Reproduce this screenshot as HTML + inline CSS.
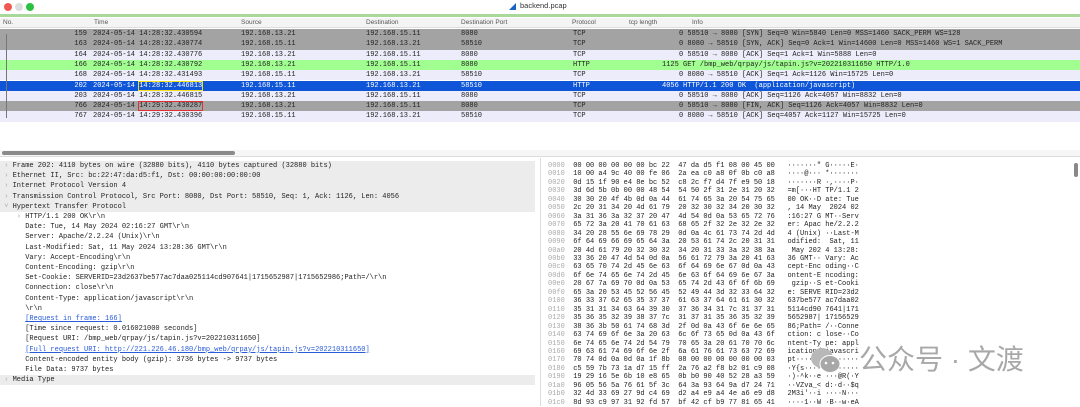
<!DOCTYPE html><html><head><meta charset="utf-8"><style>
*{margin:0;padding:0;box-sizing:border-box}
body{width:1080px;height:406px;background:#fff;position:relative;overflow:hidden;font-family:"Liberation Mono",monospace;font-size:7px;color:#222}
.a{position:absolute;white-space:pre}
.hd{font-family:"Liberation Sans",sans-serif;font-size:6.5px;color:#555}
.row{position:absolute;left:0;width:1080px;height:10.3px;line-height:10.3px}
.row .n{position:absolute;left:40px;width:47px;text-align:right}
.row .t{position:absolute;left:93px}
.g{background:#a3a3a3}.l{background:#ececfa}.gr{background:#a0ff90}.b{background:#0e55d8;color:#fff}
.dl{position:absolute;left:0;height:10.2px;line-height:10.2px;white-space:pre}
.tp{background:#ececec;width:535px}
.lk{color:#2a5bd8;text-decoration:underline}
.hx{position:absolute;left:548px;white-space:pre;line-height:8.45px}
.of{color:#aaa}
</style></head><body>
<div class="a" style="left:4px;top:3px;width:8px;height:8px;border-radius:50%;background:#ee5a52"></div>
<div class="a" style="left:15px;top:3px;width:8px;height:8px;border-radius:50%;background:#ddd"></div>
<div class="a" style="left:26px;top:3px;width:8px;height:8px;border-radius:50%;background:#2bc140"></div>
<svg class="a" style="left:508px;top:2px" width="9" height="9"><path d="M1 8 L8 1 L8 8 Z" fill="#1a63c8"/></svg>
<div class="a" style="left:520px;top:1px;font-family:'Liberation Sans',sans-serif;font-size:7.5px;color:#333">backend.pcap</div>
<div class="a" style="left:0;top:14px;width:1080px;height:3px;background:#a8d89a"></div>
<div class="a" style="left:0;top:18px;width:1080px;height:10px;background:#f4f4f4;border-bottom:1px solid #ddd"></div>
<div class="a hd" style="left:3px;top:19px">No.</div>
<div class="a hd" style="left:94px;top:19px">Time</div>
<div class="a hd" style="left:241px;top:19px">Source</div>
<div class="a hd" style="left:366px;top:19px">Destination</div>
<div class="a hd" style="left:461px;top:19px">Destination Port</div>
<div class="a hd" style="left:572px;top:19px">Protocol</div>
<div class="a hd" style="left:629px;top:19px">tcp length</div>
<div class="a hd" style="left:692px;top:19px">Info</div>

<div class="row g" style="top:29px"><span class="n">159</span><span class="t">2024-05-14 14:28:32.430594</span><span class="a" style="left:241px">192.168.13.21</span><span class="a" style="left:366px">192.168.15.11</span><span class="a" style="left:461px">8080</span><span class="a" style="left:573px">TCP</span><span class="a" style="left:679px">0 58510 → 8080 [SYN] Seq=0 Win=5840 Len=0 MSS=1460 SACK_PERM WS=128</span></div>
<div class="row g" style="top:39.3px"><span class="n">163</span><span class="t">2024-05-14 14:28:32.430774</span><span class="a" style="left:241px">192.168.15.11</span><span class="a" style="left:366px">192.168.13.21</span><span class="a" style="left:461px">58510</span><span class="a" style="left:573px">TCP</span><span class="a" style="left:679px">0 8080 → 58510 [SYN, ACK] Seq=0 Ack=1 Win=14600 Len=0 MSS=1460 WS=1 SACK_PERM</span></div>
<div class="row l" style="top:49.6px"><span class="n">164</span><span class="t">2024-05-14 14:28:32.430776</span><span class="a" style="left:241px">192.168.13.21</span><span class="a" style="left:366px">192.168.15.11</span><span class="a" style="left:461px">8080</span><span class="a" style="left:573px">TCP</span><span class="a" style="left:679px">0 58510 → 8080 [ACK] Seq=1 Ack=1 Win=5888 Len=0</span></div>
<div class="row gr" style="top:59.9px"><span class="n">166</span><span class="t">2024-05-14 14:28:32.430792</span><span class="a" style="left:241px">192.168.13.21</span><span class="a" style="left:366px">192.168.15.11</span><span class="a" style="left:461px">8080</span><span class="a" style="left:573px">HTTP</span><span class="a" style="left:662px">1125 GET /bmp_web/qrpay/js/tapin.js?v=202210311650 HTTP/1.0</span></div>
<div class="row l" style="top:70.2px"><span class="n">168</span><span class="t">2024-05-14 14:28:32.431493</span><span class="a" style="left:241px">192.168.15.11</span><span class="a" style="left:366px">192.168.13.21</span><span class="a" style="left:461px">58510</span><span class="a" style="left:573px">TCP</span><span class="a" style="left:679px">0 8080 → 58510 [ACK] Seq=1 Ack=1126 Win=15725 Len=0</span></div>
<div class="row b" style="top:80.5px"><span class="n">202</span><span class="t">2024-05-14 <span style="outline:1px solid #f0e020">14:28:32.446813</span></span><span class="a" style="left:241px">192.168.15.11</span><span class="a" style="left:366px">192.168.13.21</span><span class="a" style="left:461px">58510</span><span class="a" style="left:573px">HTTP</span><span class="a" style="left:662px">4056 HTTP/1.1 200 OK  (application/javascript)</span></div>
<div class="row l" style="top:90.8px"><span class="n">203</span><span class="t">2024-05-14 14:28:32.446815</span><span class="a" style="left:241px">192.168.13.21</span><span class="a" style="left:366px">192.168.15.11</span><span class="a" style="left:461px">8080</span><span class="a" style="left:573px">TCP</span><span class="a" style="left:679px">0 58510 → 8080 [ACK] Seq=1126 Ack=4057 Win=8832 Len=0</span></div>
<div class="row g" style="top:101.1px"><span class="n">766</span><span class="t">2024-05-14 <span style="outline:1px solid #e03030">14:29:32.430287</span></span><span class="a" style="left:241px">192.168.13.21</span><span class="a" style="left:366px">192.168.15.11</span><span class="a" style="left:461px">8080</span><span class="a" style="left:573px">TCP</span><span class="a" style="left:679px">0 58510 → 8080 [FIN, ACK] Seq=1126 Ack=4057 Win=8832 Len=0</span></div>
<div class="row l" style="top:111.4px"><span class="n">767</span><span class="t">2024-05-14 14:29:32.430396</span><span class="a" style="left:241px">192.168.15.11</span><span class="a" style="left:366px">192.168.13.21</span><span class="a" style="left:461px">58510</span><span class="a" style="left:573px">TCP</span><span class="a" style="left:679px">0 8080 → 58510 [ACK] Seq=4057 Ack=1127 Win=15725 Len=0</span></div>
<div class="a" style="left:6px;top:34px;width:1px;height:84px;background:#777"></div>

<div class="a" style="left:0;top:150px;width:1080px;height:7px;background:#f6f6f6;border-bottom:1px solid #ddd"></div>
<div class="a" style="left:2px;top:151px;width:233px;height:4px;border-radius:2px;background:#8a8a8a"></div>

<div style="position:absolute;left:0;top:161px;width:540px">
<div class="dl tp" style="top:0"><span style="color:#aaa"> ›</span> Frame 202: 4110 bytes on wire (32880 bits), 4110 bytes captured (32880 bits)</div>
<div class="dl tp" style="top:10.2px"><span style="color:#aaa"> ›</span> Ethernet II, Src: bc:22:47:da:d5:f1, Dst: 00:00:00:00:00:00</div>
<div class="dl tp" style="top:20.4px"><span style="color:#aaa"> ›</span> Internet Protocol Version 4</div>
<div class="dl tp" style="top:30.6px"><span style="color:#aaa"> ›</span> Transmission Control Protocol, Src Port: 8080, Dst Port: 58510, Seq: 1, Ack: 1126, Len: 4056</div>
<div class="dl tp" style="top:40.8px"><span style="color:#aaa"> ˅</span> Hypertext Transfer Protocol</div>
<div class="dl" style="top:51px"><span style="color:#aaa">    ›</span> HTTP/1.1 200 OK\r\n</div>
<div class="dl" style="top:61.2px">      Date: Tue, 14 May 2024 02:16:27 GMT\r\n</div>
<div class="dl" style="top:71.4px">      Server: Apache/2.2.24 (Unix)\r\n</div>
<div class="dl" style="top:81.6px">      Last-Modified: Sat, 11 May 2024 13:28:36 GMT\r\n</div>
<div class="dl" style="top:91.8px">      Vary: Accept-Encoding\r\n</div>
<div class="dl" style="top:102px">      Content-Encoding: gzip\r\n</div>
<div class="dl" style="top:112.2px">      Set-Cookie: SERVERID=23d2637be577ac7daa025114cd907641|1715652987|1715652986;Path=/\r\n</div>
<div class="dl" style="top:122.4px">      Connection: close\r\n</div>
<div class="dl" style="top:132.6px">      Content-Type: application/javascript\r\n</div>
<div class="dl" style="top:142.8px">      \r\n</div>
<div class="dl" style="top:153px">      <span class="lk">[Request in frame: 166]</span></div>
<div class="dl" style="top:163.2px">      [Time since request: 0.016021000 seconds]</div>
<div class="dl" style="top:173.4px">      [Request URI: /bmp_web/qrpay/js/tapin.js?v=202210311650]</div>
<div class="dl" style="top:183.6px">      <span class="lk">[Full request URI: http://221.226.46.180/bmp_web/qrpay/js/tapin.js?v=202210311650]</span></div>
<div class="dl" style="top:193.8px">      Content-encoded entity body (gzip): 3736 bytes -&gt; 9737 bytes</div>
<div class="dl" style="top:204px">      File Data: 9737 bytes</div>
<div class="dl tp" style="top:214.2px"><span style="color:#aaa"> ›</span> Media Type</div>
</div>
<div class="a" style="left:540px;top:158px;width:1px;height:248px;background:#ddd"></div>
<div class="a" style="left:1074px;top:163px;width:4px;height:14px;border-radius:2px;background:#888"></div>

<div class="hx" style="top:162px"><span class="of">0000</span>  00 00 00 00 00 00 bc 22  47 da d5 f1 08 00 45 00   ·······" G·····E·
<span class="of">0010</span>  10 00 a4 9c 40 00 fe 06  2a ea c0 a8 0f 0b c0 a8   ····@··· *·······
<span class="of">0020</span>  0d 15 1f 90 e4 8e bc 52  c8 2c f7 d4 7f e9 50 18   ·······R ·,····P·
<span class="of">0030</span>  3d 6d 5b 0b 00 00 48 54  54 50 2f 31 2e 31 20 32   =m[···HT TP/1.1 2
<span class="of">0040</span>  30 30 20 4f 4b 0d 0a 44  61 74 65 3a 20 54 75 65   00 OK··D ate: Tue
<span class="of">0050</span>  2c 20 31 34 20 4d 61 79  20 32 30 32 34 20 30 32   , 14 May  2024 02
<span class="of">0060</span>  3a 31 36 3a 32 37 20 47  4d 54 0d 0a 53 65 72 76   :16:27 G MT··Serv
<span class="of">0070</span>  65 72 3a 20 41 70 61 63  68 65 2f 32 2e 32 2e 32   er: Apac he/2.2.2
<span class="of">0080</span>  34 20 28 55 6e 69 78 29  0d 0a 4c 61 73 74 2d 4d   4 (Unix) ··Last-M
<span class="of">0090</span>  6f 64 69 66 69 65 64 3a  20 53 61 74 2c 20 31 31   odified:  Sat, 11
<span class="of">00a0</span>  20 4d 61 79 20 32 30 32  34 20 31 33 3a 32 38 3a    May 202 4 13:28:
<span class="of">00b0</span>  33 36 20 47 4d 54 0d 0a  56 61 72 79 3a 20 41 63   36 GMT·· Vary: Ac
<span class="of">00c0</span>  63 65 70 74 2d 45 6e 63  6f 64 69 6e 67 0d 0a 43   cept-Enc oding··C
<span class="of">00d0</span>  6f 6e 74 65 6e 74 2d 45  6e 63 6f 64 69 6e 67 3a   ontent-E ncoding:
<span class="of">00e0</span>  20 67 7a 69 70 0d 0a 53  65 74 2d 43 6f 6f 6b 69    gzip··S et-Cooki
<span class="of">00f0</span>  65 3a 20 53 45 52 56 45  52 49 44 3d 32 33 64 32   e: SERVE RID=23d2
<span class="of">0100</span>  36 33 37 62 65 35 37 37  61 63 37 64 61 61 30 32   637be577 ac7daa02
<span class="of">0110</span>  35 31 31 34 63 64 39 30  37 36 34 31 7c 31 37 31   5114cd90 7641|171
<span class="of">0120</span>  35 36 35 32 39 38 37 7c  31 37 31 35 36 35 32 39   5652987| 17156529
<span class="of">0130</span>  38 36 3b 50 61 74 68 3d  2f 0d 0a 43 6f 6e 6e 65   86;Path= /··Conne
<span class="of">0140</span>  63 74 69 6f 6e 3a 20 63  6c 6f 73 65 0d 0a 43 6f   ction: c lose··Co
<span class="of">0150</span>  6e 74 65 6e 74 2d 54 79  70 65 3a 20 61 70 70 6c   ntent-Ty pe: appl
<span class="of">0160</span>  69 63 61 74 69 6f 6e 2f  6a 61 76 61 73 63 72 69   ication/ javascri
<span class="of">0170</span>  70 74 0d 0a 0d 0a 1f 8b  08 00 00 00 00 00 00 03   pt······ ········
<span class="of">0180</span>  c5 59 7b 73 1a d7 15 ff  2a 76 a2 f8 b2 01 c9 08   ·Y{s···· *v······
<span class="of">0190</span>  19 29 16 5e 6b 10 e8 65  0b b0 90 40 52 28 a3 59   ·)·^k··e ···@R(·Y
<span class="of">01a0</span>  96 05 56 5a 76 61 5f 3c  64 3a 93 64 9a d7 24 71   ··VZva_< d:·d··$q
<span class="of">01b0</span>  32 4d 33 69 27 9d c4 69  d2 a4 e9 a4 4e a6 e9 d8   2M3i'··i ····N···
<span class="of">01c0</span>  8d 93 c9 97 31 92 fd 57  bf 42 cf b9 77 81 65 41   ····1··W ·B··w·eA</div>

<svg class="a" style="left:810px;top:346px" width="32" height="28"><ellipse cx="12" cy="12" rx="11" ry="10" fill="#b8b8b8"/><ellipse cx="20" cy="18" rx="10" ry="8.5" fill="#a8a8a8" stroke="#fff" stroke-width="1"/><circle cx="16" cy="17" r="1.3" fill="#fff"/><circle cx="23" cy="17" r="1.3" fill="#fff"/></svg>
<div class="a" style="left:859px;top:343px;font-family:'Liberation Sans','Noto Sans CJK SC',sans-serif;font-size:28px;line-height:34px;color:#9a9a9a;opacity:.85">公众号 · 文渡</div>
</body></html>
